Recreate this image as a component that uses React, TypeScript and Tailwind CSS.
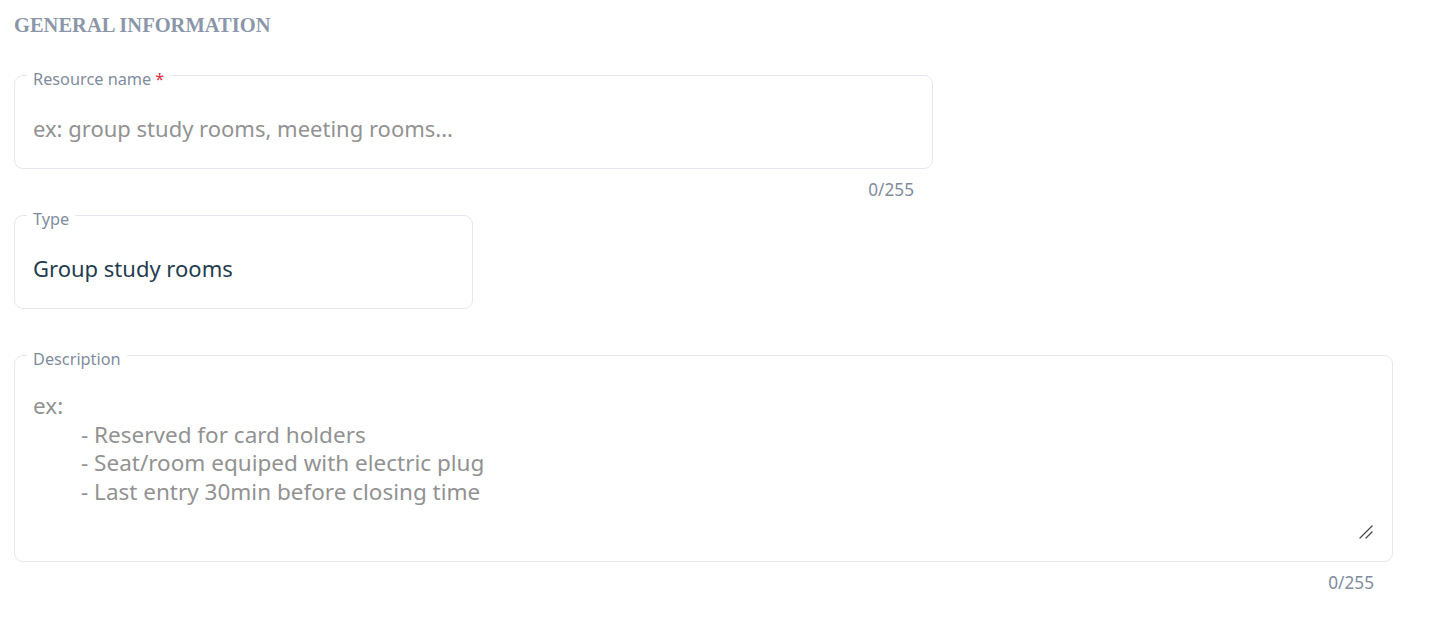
import React from "react";

const font = { fontFamily: '"Noto Sans", "Open Sans", sans-serif' };

function Field({
  label,
  required,
  className,
  children,
}: {
  label: string;
  required?: boolean;
  className: string;
  children: React.ReactNode;
}) {
  return (
    <fieldset
      className={`rounded-[9px] border border-[#e3e8ee] px-[18px] ${className}`}
    >
      <legend className="-ml-[6px] px-[6px] text-[16.3px] leading-[20px] text-[#7f8ca0]">
        <span className="relative top-[4px]">
          {label}
          {required ? (
            <span className="ml-[4px] text-[#e0303c]">*</span>
          ) : null}
        </span>
      </legend>
      {children}
    </fieldset>
  );
}

function Counter({ className }: { className: string }) {
  return (
    <p
      className={`pr-[19px] text-right text-[17.2px] leading-[20px] text-[#7f8ca0] ${className}`}
    >
      0/255
    </p>
  );
}

export default function App() {
  return (
    <div className="min-h-screen bg-white px-[14px] pt-[11px]" style={font}>
      <h2
        className="text-[20.5px] font-bold uppercase leading-[28px] text-[#8b97a9]"
        style={{ fontFamily: '"Liberation Serif", serif' }}
      >
        General information
      </h2>

      <div className="mt-[26px] w-[919px]">
        <Field label="Resource name" required className="h-[104px]">
          <input
            className="mt-[29px] w-full bg-transparent text-[22px] leading-[28px] text-[#1f3d4f] outline-none placeholder:text-[#929292]"
            placeholder="ex: group study rooms, meeting rooms..."
            type="text"
          />
        </Field>
        <Counter className="mt-[11px]" />
      </div>

      <div className="mt-[5px] w-[459px]">
        <Field label="Type" className="h-[104px]">
          <p className="mt-[29px] text-[22px] leading-[28px] text-[#1f3d4f]">
            Group study rooms
          </p>
        </Field>
      </div>

      <div className="mt-[36px] w-[1379px]">
        <Field label="Description" className="relative h-[217px]">
          <div className="mt-[27px] text-[22.5px] leading-[28.5px] text-[#929292]">
            <p>ex:</p>
            <div className="pl-[48px]">
              <p>- Reserved for card holders</p>
              <p>- Seat/room equiped with electric plug</p>
              <p>- Last entry 30min before closing time</p>
            </div>
          </div>
          <svg
            className="absolute bottom-[22px] right-[19px]"
            width="14"
            height="14"
            viewBox="0 0 14 14"
          >
            <path
              d="M1 13L13 1M7 13L13 7"
              stroke="#4a4a4a"
              strokeWidth="1.3"
              strokeLinecap="round"
            />
          </svg>
        </Field>
        <Counter className="mt-[11px]" />
      </div>
    </div>
  );
}
